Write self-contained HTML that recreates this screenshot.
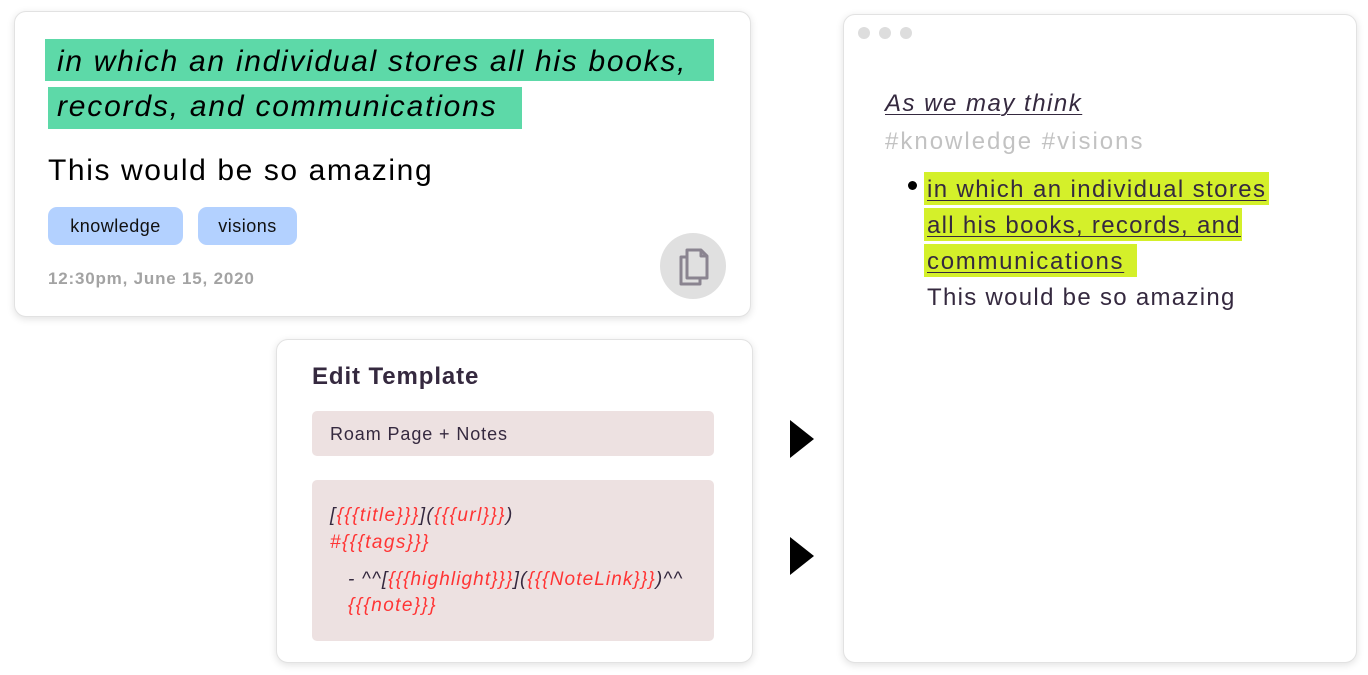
<!DOCTYPE html>
<html><head><meta charset="utf-8"><style>
*{margin:0;padding:0;box-sizing:border-box}
body{width:1368px;height:675px;background:#fff;position:relative;overflow:hidden;font-family:"Liberation Sans",sans-serif;color:#000}
.a{position:absolute;white-space:nowrap}
.card{position:absolute;background:#fff;border:1px solid #e2e2e2;border-radius:12px;box-shadow:0 2px 8px rgba(0,0,0,.12)}
.hl{position:absolute;background:#5dd9a8}
.tag{position:absolute;background:#b3d1ff;border-radius:9px;font-size:18px;line-height:38px;text-align:center;color:#111;letter-spacing:0.5px}
.r{color:#ff3434}
.g{background:#d4f02a;position:absolute}
.u{text-decoration:underline;text-decoration-thickness:1px;text-underline-offset:3px}
</style></head><body>

<div class="card" style="left:14px;top:11px;width:737px;height:306px"></div>
<div class="hl" style="left:45px;top:39px;width:669px;height:42px"></div>
<div class="hl" style="left:48px;top:87px;width:474px;height:42px"></div>
<div class="a" style="left:57px;top:45px;font-size:30px;font-style:italic;letter-spacing:1.7px">in which an individual stores all his books,</div>
<div class="a" style="left:57px;top:90px;font-size:30px;font-style:italic;letter-spacing:1.8px">records, and communications</div>
<div class="a" style="left:48px;top:154px;font-size:30px;letter-spacing:1.6px">This would be so amazing</div>
<div class="tag" style="left:48px;top:207px;width:135px">knowledge</div>
<div class="tag" style="left:198px;top:207px;width:99px">visions</div>
<div class="a" style="left:48px;top:269px;font-size:17px;font-weight:bold;color:#a3a3a3;letter-spacing:0.8px">12:30pm, June 15, 2020</div>
<div class="a" style="left:660px;top:233px;width:66px;height:66px;border-radius:50%;background:#e0e0e0"></div>
<svg class="a" style="left:676px;top:246px" width="36" height="42" viewBox="0 0 36 42" fill="none" stroke="#8a8490" stroke-width="3" stroke-linejoin="round"><path d="M11 4h14l6 6v22H11z"/><path d="M25 4v6h6"/><path d="M11 11H5v27h19v-6"/></svg>

<div class="card" style="left:276px;top:339px;width:477px;height:324px"></div>
<div class="a" style="left:312px;top:363px;font-size:24px;font-weight:bold;color:#35293f;letter-spacing:0.9px">Edit Template</div>
<div class="a" style="left:312px;top:411px;width:402px;height:45px;background:#ede1e1;border-radius:5px"></div>
<div class="a" style="left:330px;top:424px;font-size:18px;color:#35293f;letter-spacing:0.9px">Roam Page + Notes</div>
<div class="a" style="left:312px;top:480px;width:402px;height:161px;background:#ede1e1;border-radius:5px"></div>
<div class="a" style="left:330px;top:505px;font-size:19px;font-style:italic;color:#35293f;letter-spacing:1.4px">[<span class="r">{{{title}}}</span>](<span class="r">{{{url}}}</span>)</div>
<div class="a r" style="left:330px;top:532px;font-size:19px;font-style:italic;letter-spacing:1.4px">#{{{tags}}}</div>
<div class="a" style="left:348px;top:569px;font-size:19px;font-style:italic;color:#35293f;letter-spacing:1.1px">- ^^[<span class="r">{{{highlight}}}</span>](<span class="r">{{{NoteLink}}}</span>)^^</div>
<div class="a r" style="left:348px;top:595px;font-size:19px;font-style:italic;letter-spacing:1.4px">{{{note}}}</div>

<svg class="a" style="left:790px;top:420px" width="24" height="160"><path d="M0 0L24 19L0 38z" fill="#000"/><path d="M0 117L24 136L0 155z" fill="#000"/></svg>

<div class="card" style="left:843px;top:14px;width:514px;height:649px"></div>
<div class="a" style="left:858px;top:27px;width:12px;height:12px;border-radius:50%;background:#ddd"></div>
<div class="a" style="left:879px;top:27px;width:12px;height:12px;border-radius:50%;background:#ddd"></div>
<div class="a" style="left:900px;top:27px;width:12px;height:12px;border-radius:50%;background:#ddd"></div>
<div class="a u" style="left:885px;top:90px;font-size:24px;font-style:italic;color:#35293f;letter-spacing:1.5px">As we may think</div>
<div class="a" style="left:885px;top:128px;font-size:24px;color:#c2c2c2;letter-spacing:2px">#knowledge #visions</div>
<div class="a" style="left:908px;top:181px;width:9px;height:9px;border-radius:50%;background:#000"></div>
<div class="g" style="left:924px;top:172px;width:345px;height:33px"></div>
<div class="g" style="left:924px;top:208px;width:318px;height:33px"></div>
<div class="g" style="left:924px;top:244px;width:213px;height:33px"></div>
<div class="a u" style="left:927px;top:176px;font-size:24px;color:#35293f;letter-spacing:1.4px">in which an individual stores</div>
<div class="a u" style="left:927px;top:212px;font-size:24px;color:#35293f;letter-spacing:1.3px">all his books, records, and</div>
<div class="a u" style="left:927px;top:248px;font-size:24px;color:#35293f;letter-spacing:1.7px">communications</div>
<div class="a" style="left:927px;top:284px;font-size:24px;color:#35293f;letter-spacing:1.3px">This would be so amazing</div>
</body></html>
